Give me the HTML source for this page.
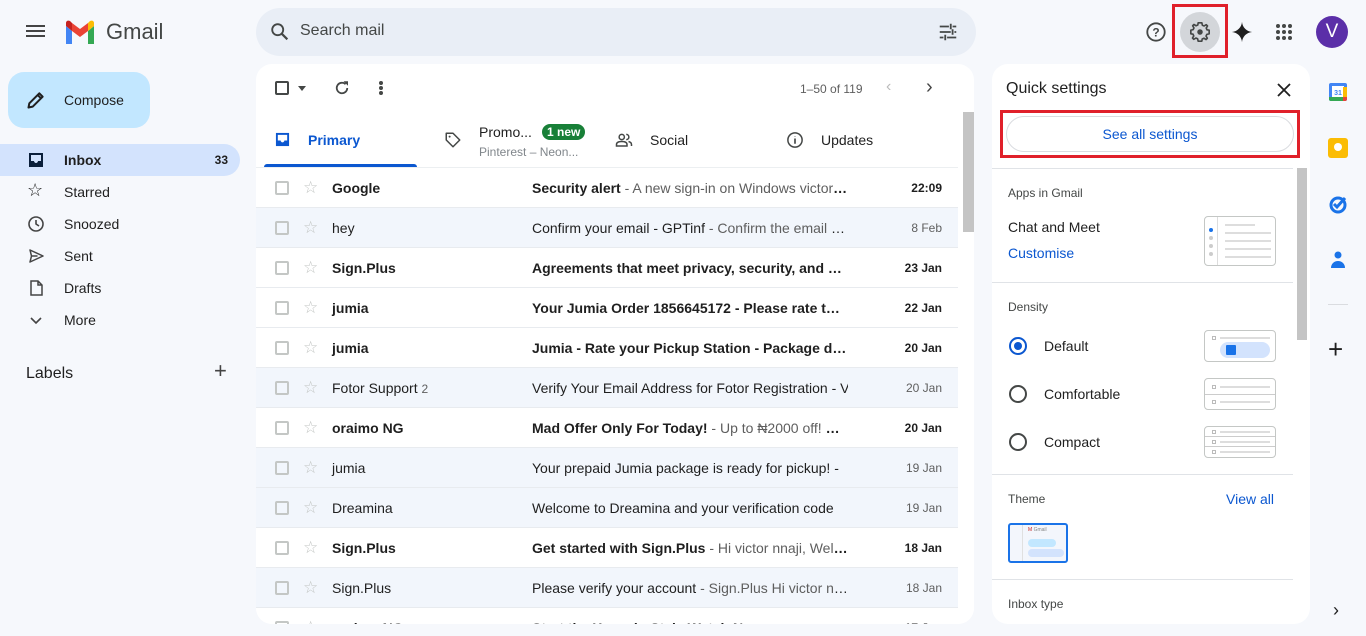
<!DOCTYPE html>
<html><head><meta charset="utf-8"><style>
*{box-sizing:border-box;margin:0;padding:0}
body{width:1366px;height:636px;overflow:hidden;background:#f6f8fc;font-family:"Liberation Sans",Arial,sans-serif;color:#1f1f1f;position:relative}
.abs{position:absolute}
.nav{position:absolute;left:0;width:240px;height:32px;display:flex;align-items:center;font-size:14px;color:#1f1f1f}
.nav .ic{position:absolute;left:28px;top:8px;width:16px;height:16px}
.nav span{position:absolute;left:64px}
.row{position:absolute;left:256px;width:702px;height:40px;border-bottom:1px solid #e8ebef;font-size:14px}
.row.r{background:#f2f6fc}
.row .cb{position:absolute;left:19px;top:13px;width:14px;height:14px;border:2px solid #c4c7c5;border-radius:2px}
.row .st{position:absolute;left:47px;top:11px;color:#c4c7c5;font-size:17px;line-height:17px}
.row .snd{position:absolute;left:76px;top:12px;white-space:nowrap}
.row .sub{position:absolute;left:276px;top:12px;width:316px;white-space:nowrap;overflow:hidden;text-overflow:ellipsis}
.row .sub i{font-style:normal;color:#5e5e5e;font-weight:normal}
.row .dt{position:absolute;right:16px;top:13px;font-size:12px;color:#5e5e5e}
.row.u .snd,.row.u .sub,.row.u .dt{font-weight:bold;color:#1f1f1f}
.qs{font-size:14px}
.hr{position:absolute;left:992px;width:301px;height:1px;background:#e0e3e7}
.thumb{position:absolute;left:1204px;width:72px;border:1px solid #c4c7c5;border-radius:4px;background:#fff}
.radio{position:absolute;left:1009px;width:18px;height:18px;border:2px solid #444746;border-radius:50%}
</style></head><body>
<!-- header -->
<div class="abs" style="left:26px;top:25px;width:19px;height:2px;background:#444;box-shadow:0 5px 0 #444,0 10px 0 #444"></div>
<svg class="abs" style="left:64px;top:20px" width="32" height="24" viewBox="0 0 32 24"><path d="M2 24V6l14 10 14-10v18h-6V11l-8 6-8-6v13z" fill="#fff"/><path d="M2 24h6V11L2 6z" fill="#4285f4"/><path d="M24 24h6V6l-6 5z" fill="#34a853"/><path d="M24 3v8l6-5V3c0-2-2-3-4-2z" fill="#fbbc04"/><path d="M8 11V3l8 6 8-6v8l-8 6z" fill="#ea4335"/><path d="M2 3v3l6 5V3L6 1C4 0 2 1 2 3z" fill="#c5221f"/></svg>
<div class="abs" style="left:106px;top:19px;font-size:22px;color:#444746">Gmail</div>
<div class="abs" style="left:256px;top:8px;width:720px;height:48px;border-radius:24px;background:#e9eef6"></div>
<svg class="abs" style="left:269px;top:21px" width="22" height="22" viewBox="0 0 24 24"><circle cx="9.5" cy="9.5" r="6" fill="none" stroke="#444746" stroke-width="2"/><path d="M14 14l6 6" stroke="#444746" stroke-width="2.4"/></svg>
<div class="abs" style="left:300px;top:22px;font-size:16px;color:#444746">Search mail</div>
<svg class="abs" style="left:937px;top:21px" width="22" height="22" viewBox="0 0 24 24" fill="none" stroke="#444746" stroke-width="2"><path d="M3 6h10M17 6h4M15 3v6M3 18h4M11 18h10M9 15v6M3 12h12M19 12h2M17 9v6" /></svg>
<svg class="abs" style="left:1145px;top:21px" width="22" height="22" viewBox="0 0 24 24"><circle cx="12" cy="12" r="9.5" fill="none" stroke="#444746" stroke-width="2"/><text x="12" y="17" font-size="13" text-anchor="middle" fill="#444746" font-family="Liberation Sans" font-weight="bold">?</text></svg>
<div class="abs" style="left:1180px;top:12px;width:40px;height:40px;border-radius:50%;background:#d3d6da"></div>
<svg class="abs" style="left:1189px;top:21px" width="22" height="22" viewBox="0 0 24 24"><path d="M12 2l2 0 .6 2.6 1.9.8 2.3-1.4 1.4 1.4-1.4 2.3.8 1.9L22 10v4l-2.6.6-.8 1.9 1.4 2.3-1.4 1.4-2.3-1.4-1.9.8L14 22h-4l-.6-2.6-1.9-.8-2.3 1.4-1.4-1.4 1.4-2.3-.8-1.9L2 14v-4l2.6-.6.8-1.9-1.4-2.3 1.4-1.4 2.3 1.4 1.9-.8L10 2z" fill="none" stroke="#444746" stroke-width="1.8" stroke-linejoin="round"/><circle cx="12" cy="12" r="3" fill="#444746"/></svg>
<div class="abs" style="left:1172px;top:4px;width:56px;height:54px;border:3px solid #e0202a"></div>
<svg class="abs" style="left:1231px;top:21px" width="22" height="22" viewBox="0 0 24 24"><path d="M12 1C12.5 7 17 11.5 23 12 17 12.5 12.5 17 12 23 11.5 17 7 12.5 1 12 7 11.5 11.5 7 12 1z" fill="#1f1f1f"/></svg>
<svg class="abs" style="left:1275px;top:23px" width="18" height="18" viewBox="0 0 18 18" fill="#444746"><circle cx="3" cy="3" r="2"/><circle cx="9" cy="3" r="2"/><circle cx="15" cy="3" r="2"/><circle cx="3" cy="9" r="2"/><circle cx="9" cy="9" r="2"/><circle cx="15" cy="9" r="2"/><circle cx="3" cy="15" r="2"/><circle cx="9" cy="15" r="2"/><circle cx="15" cy="15" r="2"/></svg>
<div class="abs" style="left:1316px;top:16px;width:32px;height:32px;border-radius:50%;background:#5b2fa8;color:#fff;font-size:19px;text-align:center;line-height:32px">V</div>

<!-- left nav -->
<div class="abs" style="left:8px;top:72px;width:142px;height:56px;border-radius:16px;background:#c2e7ff"></div>
<svg class="abs" style="left:26px;top:90px" width="20" height="20" viewBox="0 0 24 24"><path d="M3 21l1-5L16 4l4 4L8 20zM14 6l4 4" fill="none" stroke="#1f1f1f" stroke-width="2.4" stroke-linejoin="round"/></svg>
<div class="abs" style="left:64px;top:92px;font-size:14px;color:#1f1f1f">Compose</div>
<div class="nav" style="top:144px;background:#d3e3fd;border-radius:0 16px 16px 0;font-weight:bold"><svg class="ic" viewBox="0 0 16 16"><path d="M1 1h14v14H1z" fill="#0b1f3a"/><path d="M3 3h10v6h-3c0 1-1 2-2 2s-2-1-2-2H3z" fill="#d3e3fd"/></svg><span>Inbox</span><b style="position:absolute;right:12px;font-size:12px">33</b></div>
<div class="nav" style="top:176px"><span class="ic" style="top:5px;font-size:18px;line-height:18px;left:27px">☆</span><span>Starred</span></div>
<div class="nav" style="top:208px"><svg class="ic" viewBox="0 0 16 16"><circle cx="8" cy="8" r="7" fill="none" stroke="#444" stroke-width="1.6"/><path d="M8 4v4l3 2" fill="none" stroke="#444" stroke-width="1.6"/></svg><span>Snoozed</span></div>
<div class="nav" style="top:240px"><svg class="ic" viewBox="0 0 16 16"><path d="M2 2l13 6-13 6 1.5-6z M3.5 8h6" fill="none" stroke="#444" stroke-width="1.5" stroke-linejoin="round"/></svg><span>Sent</span></div>
<div class="nav" style="top:272px"><svg class="ic" viewBox="0 0 16 16"><path d="M3 1h7l4 4v10H3zM10 1v4h4" fill="none" stroke="#444" stroke-width="1.5"/></svg><span>Drafts</span></div>
<div class="nav" style="top:304px"><svg class="ic" viewBox="0 0 16 16"><path d="M3 6l5 5 5-5" fill="none" stroke="#444" stroke-width="1.6"/></svg><span>More</span></div>
<div class="abs" style="left:26px;top:365px;font-size:16px;color:#1f1f1f">Labels</div>
<div class="abs" style="left:214px;top:358px;font-size:22px;color:#444">+</div>

<!-- main panel -->
<div class="abs" style="left:256px;top:64px;width:718px;height:560px;background:#fff;border-radius:16px;overflow:hidden">
<div class="abs" style="left:19px;top:17px;width:14px;height:14px;border:2px solid #444746;border-radius:2px"></div>
<div class="abs" style="left:42px;top:22px;border:4px solid transparent;border-top:5px solid #444746"></div>
<svg class="abs" style="left:77px;top:15px" width="18" height="18" viewBox="0 0 24 24"><path d="M19 12a7 7 0 1 1-2.2-5.1" fill="none" stroke="#444746" stroke-width="2.4"/><path d="M14 3h6v6z" fill="#444746"/></svg>
<div class="abs" style="left:123px;top:17px;width:4px;height:4px;border-radius:50%;background:#444746;box-shadow:0 5px 0 #444746,0 10px 0 #444746"></div>
<div class="abs" style="left:544px;top:18px;font-size:12px;color:#5e5e5e">1–50 of 119</div>
<div class="abs" style="left:630px;top:14px;font-size:16px;color:#bbb">‹</div>
<div class="abs" style="left:670px;top:12px;font-size:20px;color:#444">›</div>
<!-- tabs -->
<svg class="abs" style="left:19px;top:68px" width="15" height="15" viewBox="0 0 16 16"><path d="M1 1h14v14H1z" fill="#0b57d0"/><path d="M3 3h10v6h-3c0 1-1 2-2 2s-2-1-2-2H3z" fill="#fff"/></svg>
<div class="abs" style="left:52px;top:68px;font-size:14px;color:#0b57d0;font-weight:bold">Primary</div>
<div class="abs" style="left:8px;top:100px;width:153px;height:3px;background:#0b57d0;border-radius:3px 3px 0 0"></div>
<svg class="abs" style="left:188px;top:67px" width="18" height="18" viewBox="0 0 24 24"><path d="M3 3h9l9 9-9 9-9-9z" fill="none" stroke="#444746" stroke-width="2" stroke-linejoin="round" transform="rotate(0)"/><circle cx="7.5" cy="7.5" r="1.3" fill="#444746"/></svg>
<div class="abs" style="left:223px;top:60px;font-size:14px;color:#1f1f1f">Promo...</div>
<div class="abs" style="left:286px;top:60px;height:16px;padding:0 5px;border-radius:8px;background:#188038;color:#fff;font-size:12px;font-weight:bold;line-height:16px">1 new</div>
<div class="abs" style="left:223px;top:81px;font-size:12px;color:#80868b">Pinterest – Neon...</div>
<svg class="abs" style="left:359px;top:67px" width="18" height="18" viewBox="0 0 24 24" fill="none" stroke="#444746" stroke-width="2"><circle cx="9" cy="8" r="3.5"/><path d="M2 20v-2c0-3 3-4 7-4s7 1 7 4v2zM15 4.5a3.5 3.5 0 0 1 0 7M18 14c2 .5 4 1.5 4 4v2"/></svg>
<div class="abs" style="left:394px;top:68px;font-size:14px;color:#1f1f1f">Social</div>
<svg class="abs" style="left:530px;top:67px" width="18" height="18" viewBox="0 0 24 24"><circle cx="12" cy="12" r="9.5" fill="none" stroke="#444746" stroke-width="2"/><path d="M12 10v7M12 7v.5" stroke="#444746" stroke-width="2.2"/></svg>
<div class="abs" style="left:565px;top:68px;font-size:14px;color:#1f1f1f">Updates</div>
<div class="abs" style="left:0;top:103px;width:702px;height:1px;background:#eceff1"></div>
<div class="abs" style="left:707px;top:48px;width:11px;height:120px;background:#c4c4c4"></div>
</div>
<!-- rows -->
<div class="row u" style="top:168px"><div class="cb"></div><div class="st">☆</div><div class="snd">Google</div><div class="sub">Security alert <i>- A new sign-in on Windows victor@gmail.com</i></div><div class="dt">22:09</div></div>
<div class="row r" style="top:208px"><div class="cb"></div><div class="st">☆</div><div class="snd">hey</div><div class="sub">Confirm your email - GPTinf <i>- Confirm the email address</i></div><div class="dt">8 Feb</div></div>
<div class="row u" style="top:248px"><div class="cb"></div><div class="st">☆</div><div class="snd">Sign.Plus</div><div class="sub">Agreements that meet privacy, security, and compliance</div><div class="dt">23 Jan</div></div>
<div class="row u" style="top:288px"><div class="cb"></div><div class="st">☆</div><div class="snd">jumia</div><div class="sub">Your Jumia Order 1856645172 - Please rate the product</div><div class="dt">22 Jan</div></div>
<div class="row u" style="top:328px"><div class="cb"></div><div class="st">☆</div><div class="snd">jumia</div><div class="sub">Jumia - Rate your Pickup Station - Package delivered</div><div class="dt">20 Jan</div></div>
<div class="row r" style="top:368px"><div class="cb"></div><div class="st">☆</div><div class="snd">Fotor Support <span style="font-size:12px;color:#5e5e5e">2</span></div><div class="sub" style="text-overflow:clip">Verify Your Email Address for Fotor Registration - Verify</div><div class="dt">20 Jan</div></div>
<div class="row u" style="top:408px"><div class="cb"></div><div class="st">☆</div><div class="snd">oraimo NG</div><div class="sub">Mad Offer Only For Today! <i>- Up to ₦2000 off! Shop now</i></div><div class="dt">20 Jan</div></div>
<div class="row r" style="top:448px"><div class="cb"></div><div class="st">☆</div><div class="snd">jumia</div><div class="sub">Your prepaid Jumia package is ready for pickup! -</div><div class="dt">19 Jan</div></div>
<div class="row r" style="top:488px"><div class="cb"></div><div class="st">☆</div><div class="snd">Dreamina</div><div class="sub">Welcome to Dreamina and your verification code</div><div class="dt">19 Jan</div></div>
<div class="row u" style="top:528px"><div class="cb"></div><div class="st">☆</div><div class="snd">Sign.Plus</div><div class="sub">Get started with Sign.Plus <i>- Hi victor nnaji, Welcome</i></div><div class="dt">18 Jan</div></div>
<div class="row r" style="top:568px"><div class="cb"></div><div class="st">☆</div><div class="snd">Sign.Plus</div><div class="sub">Please verify your account <i>- Sign.Plus Hi victor nnaji</i></div><div class="dt">18 Jan</div></div>
<div class="abs" style="left:256px;top:608px;width:718px;height:16px;overflow:hidden;background:#fff;border-radius:0 0 16px 16px"><div class="row u" style="left:0;top:0"><div class="cb"></div><div class="st">☆</div><div class="snd">oraimo NG</div><div class="sub">Start the Xmas in Style Watch Now</div><div class="dt">17 Jan</div></div></div>

<!-- quick settings -->
<div class="abs" style="left:992px;top:64px;width:318px;height:560px;background:#fff;border-radius:16px"></div>
<div class="abs" style="left:1006px;top:80px;font-size:16px;color:#1f1f1f">Quick settings</div>
<svg class="abs" style="left:1277px;top:83px" width="14" height="14" viewBox="0 0 14 14"><path d="M1 1l12 12M13 1L1 13" stroke="#1f1f1f" stroke-width="1.8"/></svg>
<div class="abs" style="left:1006px;top:116px;width:288px;height:36px;border:1px solid #dadce0;border-radius:18px;text-align:center;line-height:34px;font-size:14px;color:#0b57d0">See all settings</div>
<div class="abs" style="left:1000px;top:110px;width:300px;height:48px;border:3px solid #e0202a"></div>
<div class="hr" style="top:168px"></div>
<div class="abs" style="left:1297px;top:168px;width:10px;height:172px;background:#c4c4c4"></div>
<div class="abs qs" style="left:1008px;top:186px;font-size:12px;color:#444746">Apps in Gmail</div>
<div class="abs qs" style="left:1008px;top:219px;color:#1f1f1f">Chat and Meet</div>
<div class="abs qs" style="left:1008px;top:245px;color:#0b57d0">Customise</div>
<div class="thumb" style="top:216px;height:50px"><div class="abs" style="left:12px;top:0;width:1px;height:48px;background:#ddd"></div><div class="abs" style="left:4px;top:11px;width:4px;height:4px;border-radius:50%;background:#1a73e8;box-shadow:0 8px 0 #ccc,0 16px 0 #ccc,0 24px 0 #ccc"></div><div class="abs" style="left:20px;top:7px;width:30px;height:2px;background:#ddd"></div><div class="abs" style="left:20px;top:15px;width:46px;height:2px;background:#ddd;box-shadow:0 8px 0 #ddd,0 16px 0 #ddd,0 24px 0 #ddd"></div></div>
<div class="hr" style="top:282px"></div>
<div class="abs qs" style="left:1008px;top:300px;font-size:12px;color:#444746">Density</div>
<div class="radio" style="top:337px;border-color:#0b57d0"><div style="margin:3px;width:8px;height:8px;border-radius:50%;background:#0b57d0"></div></div>
<div class="abs qs" style="left:1044px;top:338px">Default</div>
<div class="thumb" style="top:330px;height:32px"><div class="abs" style="left:7px;top:5px;width:4px;height:4px;border:1px solid #bbb"></div><div class="abs" style="left:15px;top:6px;width:50px;height:2px;background:#ddd"></div><div class="abs" style="left:15px;top:11px;width:50px;height:16px;border-radius:8px;background:#d3e3fd"></div><div class="abs" style="left:21px;top:14px;width:10px;height:10px;background:#1a73e8;border-radius:1px"></div></div>
<div class="radio" style="top:385px"></div>
<div class="abs qs" style="left:1044px;top:386px">Comfortable</div>
<div class="thumb" style="top:378px;height:32px"><div class="abs" style="left:0;top:15px;width:70px;height:1px;background:#ccc"></div><div class="abs" style="left:7px;top:6px;width:4px;height:4px;border:1px solid #bbb;box-shadow:0 15px 0 -0px #fff"></div><div class="abs" style="left:7px;top:21px;width:4px;height:4px;border:1px solid #bbb"></div><div class="abs" style="left:15px;top:7px;width:50px;height:2px;background:#ddd;box-shadow:0 15px 0 #ddd"></div></div>
<div class="radio" style="top:433px"></div>
<div class="abs qs" style="left:1044px;top:434px">Compact</div>
<div class="thumb" style="top:426px;height:32px"><div class="abs" style="left:0;top:9px;width:70px;height:1px;background:#ccc;box-shadow:0 10px 0 #ccc"></div><div class="abs" style="left:7px;top:3px;width:4px;height:4px;border:1px solid #bbb"></div><div class="abs" style="left:7px;top:13px;width:4px;height:4px;border:1px solid #bbb"></div><div class="abs" style="left:7px;top:23px;width:4px;height:4px;border:1px solid #bbb"></div><div class="abs" style="left:15px;top:4px;width:50px;height:2px;background:#ddd;box-shadow:0 10px 0 #ddd,0 20px 0 #ddd"></div></div>
<div class="hr" style="top:474px"></div>
<div class="abs qs" style="left:1008px;top:492px;font-size:12px;color:#444746">Theme</div>
<div class="abs qs" style="left:1226px;top:491px;color:#0b57d0">View all</div>
<div class="abs" style="left:1008px;top:523px;width:60px;height:40px;border:2px solid #1a73e8;border-radius:3px;background:#f3f6fc"><div class="abs" style="left:12px;top:0;width:1px;height:36px;background:#e0e0e0"></div><div class="abs" style="left:18px;top:2px;font-size:5px;color:#c5221f">M <span style="color:#888">Gmail</span></div><div class="abs" style="left:18px;top:14px;width:28px;height:8px;border-radius:4px;background:#c2e7ff"></div><div class="abs" style="left:18px;top:24px;width:36px;height:8px;border-radius:4px;background:#d3e3fd"></div></div>
<div class="hr" style="top:579px"></div>
<div class="abs qs" style="left:1008px;top:597px;font-size:12px;color:#444746">Inbox type</div>

<!-- right rail -->
<svg class="abs" style="left:1328px;top:82px" width="20" height="20" viewBox="0 0 20 20"><rect x="1" y="1" width="18" height="18" rx="2" fill="#4285f4"/><rect x="4" y="4" width="12" height="12" fill="#fff"/><path d="M1 15h4v4H3a2 2 0 0 1-2-2z" fill="#34a853"/><path d="M15 15h4v2a2 2 0 0 1-2 2h-2z" fill="#ea4335"/><path d="M5 15h10v4H5z" fill="#34a853"/><path d="M15 5h4v10h-4z" fill="#fbbc04"/><text x="10" y="13" font-size="7" text-anchor="middle" fill="#4285f4" font-family="Liberation Sans" font-weight="bold">31</text></svg>
<div class="abs" style="left:1328px;top:138px;width:20px;height:20px;border-radius:3px;background:#fbbc04"><div style="margin:5px 6px;width:8px;height:8px;border-radius:50%;background:#fff"></div></div>
<svg class="abs" style="left:1328px;top:194px" width="20" height="20" viewBox="0 0 20 20"><circle cx="10" cy="11" r="7" fill="none" stroke="#1a73e8" stroke-width="3"/><path d="M6 10l3 3 8-9" fill="none" stroke="#1a73e8" stroke-width="3"/></svg>
<svg class="abs" style="left:1330px;top:250px" width="16" height="20" viewBox="0 0 16 20"><circle cx="8" cy="5" r="3.5" fill="#1a73e8"/><path d="M1 18c0-4 3-7 7-7s7 3 7 7z" fill="#1a73e8"/></svg>
<div class="abs" style="left:1328px;top:304px;width:20px;height:1px;background:#dadce0"></div>
<div class="abs" style="left:1328px;top:336px;font-size:26px;line-height:26px;color:#1f1f1f">+</div>
<div class="abs" style="left:1333px;top:600px;font-size:18px;color:#1f1f1f">›</div>
</body></html>
